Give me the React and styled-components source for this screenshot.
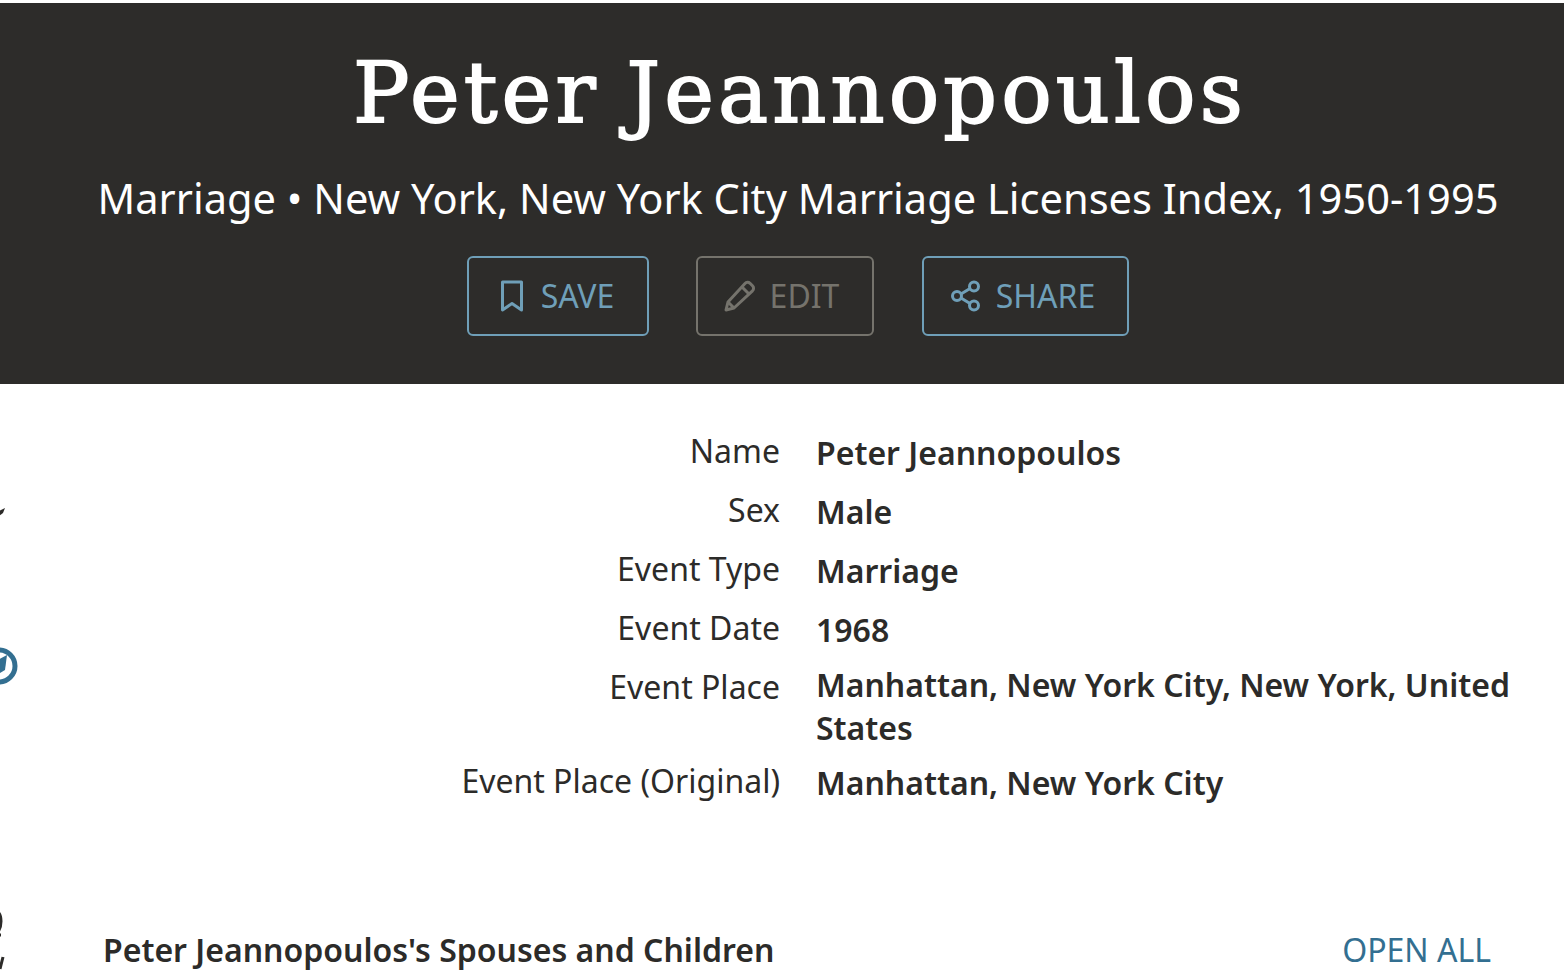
import React from "react";
import styled, { createGlobalStyle } from "styled-components";

const Global = createGlobalStyle`
  html, body { margin: 0; padding: 0; background: #fff; overflow: hidden; }
  body { font-family: "Noto Sans", "Open Sans", sans-serif; color: #2c2b29; }
`;
const Page = styled.div`
  position: relative;
  width: 1564px;
  height: 980px;
  overflow: hidden;
  padding-top: 3px;
  box-sizing: border-box;
`;
const Hero = styled.header`
  height: 381px;
  box-sizing: border-box;
  background: #2d2c2a;
  padding: 40px 0 0 32px;
  display: flex;
  flex-direction: column;
  align-items: center;
`;
const Title = styled.h1`
  margin: 0;
  padding-left: 4px;
  font-family: "DejaVu Serif", serif;
  font-weight: 400;
  font-size: 84px;
  line-height: 100px;
  letter-spacing: 4.1px;
  word-spacing: -4px;
  -webkit-text-stroke: 1.8px #fff;
  color: #fff;
  white-space: nowrap;
`;
const Subtitle = styled.p`
  margin: 27px 0 0;
  font-size: 41.6px;
  line-height: 56px;
  color: #fff;
  white-space: nowrap;
`;
const Actions = styled.div`
  display: flex;
  gap: 47px;
  margin-top: 30px;
`;
const Action = styled.button`
  height: 80px;
  width: ${(p) => p.$w}px;
  box-sizing: border-box;
  display: flex;
  align-items: center;
  justify-content: center;
  gap: ${(p) => p.$gap}px;
  background: transparent;
  border: 2px solid ${(p) => (p.$muted ? "#75736c" : "#6f9fb8")};
  border-radius: 6px;
  color: ${(p) => (p.$muted ? "#75736c" : "#6f9fb8")};
  font-family: "Noto Sans", sans-serif;
  font-size: 32px;
  margin-left: ${(p) => p.$ml ?? 0}px;
  padding: 0 ${(p) => p.$pr}px 0 0;
`;
const ActionText = styled.span`
  margin-bottom: 2px;
`;
const Facts = styled.dl`
  margin: 45px 0 0;
  display: grid;
  grid-template-columns: 780px 1fr;
  column-gap: 36px;
  font-size: 32px;
`;
const Label = styled.dt`
  text-align: right;
  line-height: 44px;
  margin-bottom: 15px;
  white-space: nowrap;
`;
const Value = styled.dd`
  margin: ${(p) => (p.$tight ? "-2px 0 10px" : "2px 0 13px")};
  line-height: ${(p) => (p.$tight ? 43 : 44)}px;
  font-weight: 600;
  width: 710px;
`;
const SectionRow = styled.div`
  display: flex;
  justify-content: space-between;
  align-items: center;
  margin: 110px 73px 0 103px;
`;
const SectionTitle = styled.h2`
  margin: 0;
  font-size: 32px;
  line-height: 44px;
  font-weight: 600;
`;
const OpenAll = styled.a`
  font-size: 32px;
  line-height: 44px;
  color: #336f91;
`;
const Clipped = styled.div`
  position: absolute;
  left: ${(p) => p.$x}px;
  top: ${(p) => p.$y}px;
  display: block;
`;

const rows = [
  ["Name", "Peter Jeannopoulos"],
  ["Sex", "Male"],
  ["Event Type", "Marriage"],
  ["Event Date", "1968"],
  ["Event Place", "Manhattan, New York City, New York, United States", true],
  ["Event Place (Original)", "Manhattan, New York City"],
];

export default function App() {
  return (
    <Page>
      <Global />
      <Hero>
        <Title>Peter Jeannopoulos</Title>
        <Subtitle>Marriage • New York, New York City Marriage Licenses Index, 1950-1995</Subtitle>
        <Actions>
          <Action $w={182} $gap={16} $pr={3}>
            <svg width="26" height="32" viewBox="0 0 26 32" fill="none" stroke="currentColor" strokeWidth="3">
              <path d="M3.500 2h19v28l-9.500-6.500L3.500 30z" strokeLinejoin="round" />
            </svg>
            <ActionText>SAVE</ActionText>
          </Action>
          <Action $w={178} $gap={14} $muted $pr={7}>
            <svg width="32" height="32" viewBox="0 0 32 32" fill="none" stroke="currentColor" strokeWidth="3" strokeLinejoin="round">
              <path d="M2 30l2-8L21 3.500a3.500 3.500 0 0 1 5-.2l2.500 2.500a3.500 3.500 0 0 1 0 5L10 28z" />
              <path d="M18 7l7 7M4 22l6 6" />
            </svg>
            <ActionText>EDIT</ActionText>
          </Action>
          <Action $w={207} $gap={14} $pr={6} $ml={1}>
            <svg width="32" height="32" viewBox="0 0 32 32" fill="none" stroke="currentColor" strokeWidth="3">
              <circle cx="7" cy="16" r="4.500" />
              <circle cx="24" cy="6.500" r="4.500" />
              <circle cx="24" cy="25.500" r="4.500" />
              <path d="M11 14l9-5.500M11 18l9 5.500" />
            </svg>
            <ActionText>SHARE</ActionText>
          </Action>
        </Actions>
      </Hero>
      <Facts>
        {rows.map(([k, v, tight]) => (
          <React.Fragment key={k}>
            <Label>{k}</Label>
            <Value $tight={tight}>{v}</Value>
          </React.Fragment>
        ))}
      </Facts>
      <SectionRow>
        <SectionTitle>Peter Jeannopoulos's Spouses and Children</SectionTitle>
        <OpenAll>OPEN ALL</OpenAll>
      </SectionRow>
      <Clipped $x={-20} $y={647}>
        <svg width="38" height="38" viewBox="0 0 38 38">
          <circle cx="19" cy="19" r="16" fill="none" stroke="#336f91" strokeWidth="5" />
          <path d="M27 8l-2 15-5 3-4-12z" fill="#336f91" />
        </svg>
      </Clipped>
      <Clipped $x={-6} $y={500}>
        <svg width="12" height="14" viewBox="0 0 12 14">
          <path d="M5 8l6-3-2 5-4 3z" fill="#2c2b29" />
        </svg>
      </Clipped>
      <Clipped $x={-6} $y={906}>
        <svg width="12" height="64" viewBox="0 0 12 64" fill="none" stroke="#2c2b29" strokeWidth="3">
          <path d="M4 6c4 4 4 14 0 20M4 29h3M9 51l-3 12" />
        </svg>
      </Clipped>
    </Page>
  );
}
